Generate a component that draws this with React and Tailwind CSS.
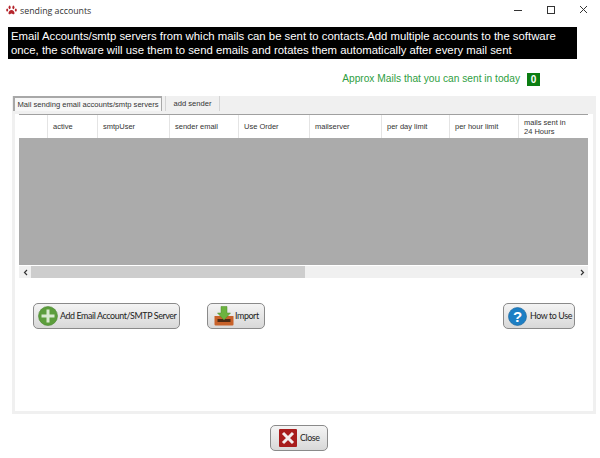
import React from 'react';

const columns = [
  ['w-[29px]', ''],
  ['w-[50px]', 'active'],
  ['w-[72px]', 'smtpUser'],
  ['w-[69px]', 'sender email'],
  ['w-[71px]', 'Use Order'],
  ['w-[72px]', 'mailserver'],
  ['w-[68px]', 'per day limit'],
  ['w-[69px]', 'per hour limit'],
  ['w-[69px]', <>mails sent in<br />24 Hours</>],
];

const btn =
  "h-[26px] flex items-center rounded-[5px] border border-[#8a8a8a] bg-gradient-to-b from-[#f4f4f4] to-[#d8d8d8] text-[8.9px] tracking-[-0.4px] text-[#222] font-['Lato',sans-serif]";

const Paw = () => (
  <svg width="11" height="11" viewBox="0 0 11 11" fill="#b5252c" className="shrink-0">
    <path d="M5.5 5c1.7 0 3 1.6 3 3.2 0 1-.8 1.3-1.5 1-.6-.2-1-.7-1.5-.7s-.9.5-1.5.7c-.7.3-1.5 0-1.5-1C2.5 6.6 3.8 5 5.5 5z" />
    <ellipse cx="1.2" cy="5" rx="1" ry="1.6" />
    <ellipse cx="3.6" cy="2.3" rx="1" ry="1.9" />
    <ellipse cx="7.4" cy="2.3" rx="1" ry="1.9" />
    <ellipse cx="9.8" cy="5" rx="1" ry="1.6" />
  </svg>
);

const PlusIcon = () => (
  <svg width="20" height="20" viewBox="0 0 20 20" className="shrink-0">
    <circle cx="10" cy="10" r="9.5" fill="#5c9e3c" stroke="#4a8530" strokeWidth="0.6" />
    <path d="M10 3.5v13M3.5 10h13" stroke="#d9ead0" strokeWidth="3" />
  </svg>
);

const ImportIcon = () => (
  <svg width="20" height="20" viewBox="0 0 20 20" className="shrink-0">
    <path d="M0.5 10h19v8.5a1 1 0 0 1-1 1h-17a1 1 0 0 1-1-1z" fill="#c8622a" />
    <path d="M3.5 13h13v3h-13z" fill="#4a2a14" />
    <path d="M7 0.5h6v6.5h3.5l-6.5 7-6.500-7h3.500z" fill="#6cb33f" stroke="#4f8f2c" strokeWidth="0.5" />
  </svg>
);

const HelpIcon = () => (
  <svg width="19" height="19" viewBox="0 0 19 19" className="shrink-0">
    <circle cx="9.5" cy="9.5" r="9" fill="#1d7fc4" stroke="#125f99" strokeWidth="0.6" />
    <text x="9.5" y="15" textAnchor="middle" fontSize="15" fontWeight="700" fill="#fff" fontFamily="Liberation Sans, sans-serif">?</text>
  </svg>
);

const CloseIcon = () => (
  <svg width="18" height="18" viewBox="0 0 18 18" className="shrink-0">
    <rect width="18" height="18" rx="1" fill="#a81c1c" />
    <path d="M4 4l10 10M14 4L4 14" stroke="#f3eded" strokeWidth="3" />
  </svg>
);

const App = () => {
  return (
    <div className="w-[600px] h-[458px] bg-white overflow-hidden flex flex-col font-['Liberation_Sans',sans-serif]">
      <div className="h-[20px] flex items-center pl-[6px]">
        <Paw />
        <span className="ml-[3px] pt-[3px] text-[8.8px] text-[#333] font-['Open_Sans',sans-serif]">sending accounts</span>
        <div className="ml-auto flex items-center">
          <svg width="100" height="20" viewBox="0 0 100 20" fill="none" stroke="#333" strokeWidth="1">
            <path d="M14 10.5h8" />
            <rect x="47.5" y="6.5" width="7" height="7" />
            <path d="M80 6l7 7M87 6l-7 7" />
          </svg>
        </div>
      </div>

      <div className="mt-[7px] ml-[8px] w-[569px] h-[32px] bg-black text-white text-[11.35px] leading-[14px] pl-[3px] pt-[2px] whitespace-nowrap">
        <p>Email Accounts/smtp servers from which mails can be sent to contacts.Add multiple accounts to the software</p>
        <p>once, the software will use them to send emails and rotates them automatically after every mail sent</p>
      </div>

      <div className="mt-[12px] h-[16px] flex items-center justify-end pr-[60px]">
        <span className="text-[#2f9e3f] text-[10.2px]">Approx Mails that you can sent in today</span>
        <span className="ml-[7px] w-[13px] h-[13px] bg-[#0b7d12] text-white text-[10px] font-bold flex items-center justify-center">0</span>
      </div>

      <div className="mt-[9px] ml-[12px] w-[584px] h-[18px] bg-[#f0f0f0] flex items-start pl-[1px]">
        <div className="h-[15px] w-[149px] border-t-2 border-l-2 border-r border-[#a8a8a8] bg-[#f7f7f7] text-[7.6px] text-[#333] flex items-center justify-center whitespace-nowrap">
          Mail sending email accounts/smtp servers
        </div>
        <div className="ml-[3px] h-[15px] w-[55px] border-r border-l border-[#d4d4d4] text-[7.6px] text-[#333] flex items-center justify-center">
          add sender
        </div>
      </div>

      <div className="ml-[12px] w-[584px] h-[300px] border-x-[3px] border-b-[3px] border-[#f0f0f0] bg-white pl-[4px]">
        <div className="w-[569px]">
          <div className="h-[24px] flex border-t border-[#a0a0a0] bg-white">
            {columns.map(([width, label], i) => (
              <div
                key={i}
                className={`${width} border-r border-[#e4e4e4] last:border-r-0 flex items-center pl-[5px] text-[7.5px] leading-[9px] text-[#333] whitespace-nowrap`}
              >
                <span>{label}</span>
              </div>
            ))}
          </div>
          <div className="h-[127px] bg-[#ababab]"></div>
          <div className="mt-[1px] h-[12px] bg-[#f0f0f0] flex items-center">
            <div className="w-[12px] flex justify-center">
              <svg width="5" height="7" viewBox="0 0 5 7" fill="none" stroke="#333" strokeWidth="1.2">
                <path d="M4 1L1.5 3.5 4 6" />
              </svg>
            </div>
            <div className="w-[274px] h-full bg-[#cdcdcd]"></div>
            <div className="flex-1"></div>
            <div className="w-[12px] flex justify-center">
              <svg width="5" height="7" viewBox="0 0 5 7" fill="none" stroke="#333" strokeWidth="1.2">
                <path d="M1 1l2.5 2.5L1 6" />
              </svg>
            </div>
          </div>

          <div className="mt-[25px] flex items-center pl-[14px]">
            <button className={`${btn} w-[147px] pl-[4px] gap-[2px]`}>
              <PlusIcon />
              <span className="whitespace-nowrap">Add Email Account/SMTP Server</span>
            </button>
            <button className={`${btn} ml-[27px] w-[58px] pl-[6px] gap-[1px]`}>
              <ImportIcon />
              <span>Import</span>
            </button>
            <button className={`${btn} ml-auto mr-[13px] w-[72px] pl-[4px] gap-[3px]`}>
              <HelpIcon />
              <span className="whitespace-nowrap">How to Use</span>
            </button>
          </div>
        </div>
      </div>

      <div className="mt-[11px] flex justify-center pr-[2px]">
        <button className={`${btn} w-[58px] pl-[8px] gap-[3px]`}>
          <CloseIcon />
          <span>Close</span>
        </button>
      </div>
    </div>
  );
};

export default App;
